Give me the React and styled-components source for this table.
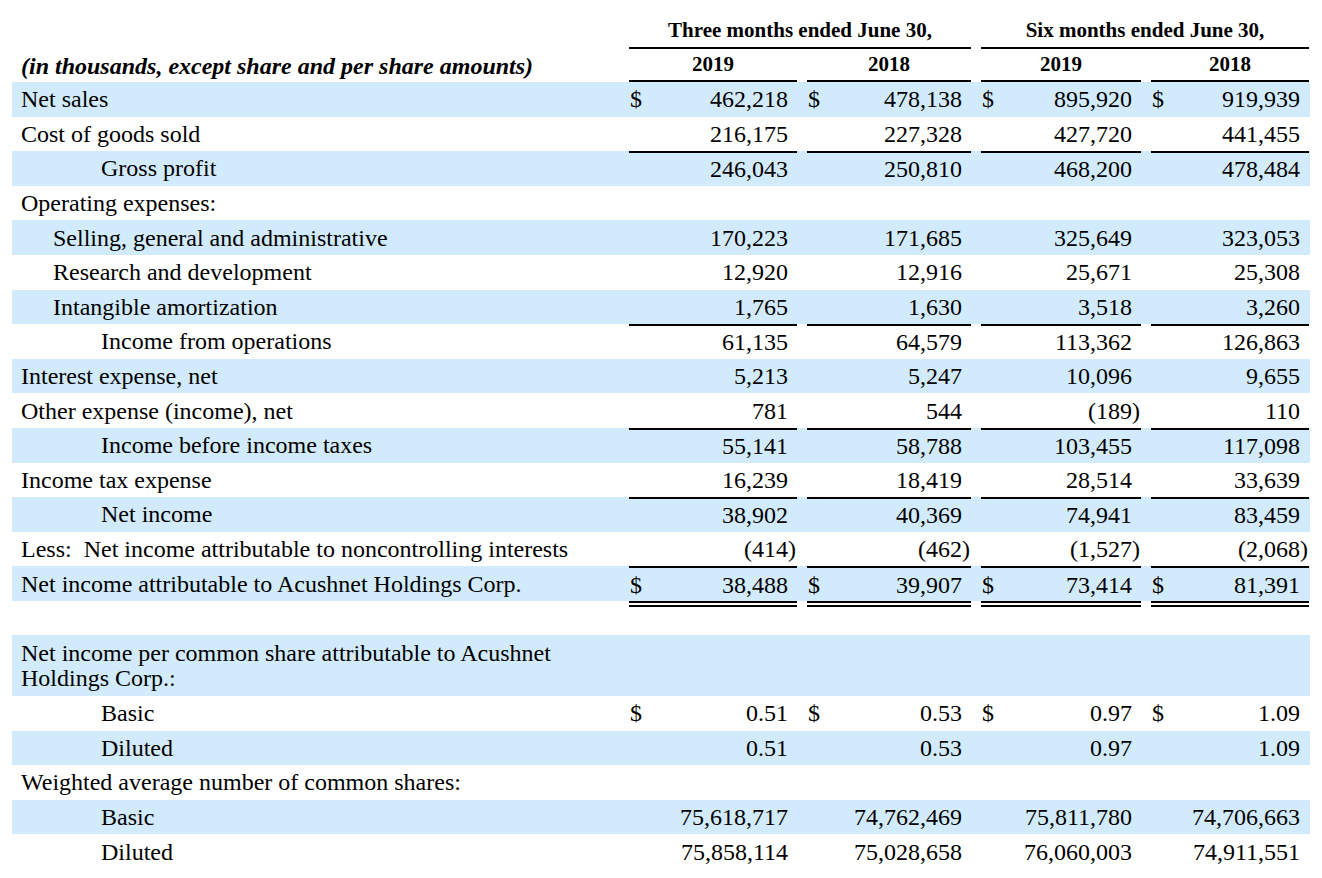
import React from 'react';
import styled, { createGlobalStyle } from 'styled-components';

const GlobalStyle = createGlobalStyle`
  body {
    margin: 0;
    background: #fff;
    color: #000;
    font-family: "Liberation Serif", "Times New Roman", serif;
  }
`;

const COLS = '607px 168px 164px 160px 158px';

const Page = styled.div`
  width: 1298px;
  padding: 0 12px;
`;

const Grid = styled.div`
  display: grid;
  grid-template-columns: ${COLS};
  column-gap: 10px;
`;

const PeriodRow = styled(Grid)`
  height: 49px;
  align-items: end;
`;

const PeriodHead = styled.div`
  grid-column: ${(p) => p.$col} / span 2;
  border-bottom: 2px solid #000;
  text-align: center;
  font-size: 21px;
  font-weight: bold;
  line-height: 23px;
  padding-bottom: 5px;
`;

const YearRow = styled(Grid)`
  height: 33px;
  align-items: end;
`;

const UnitsNote = styled.div`
  font-size: 24px;
  font-weight: bold;
  font-style: italic;
  padding: 0 0 3px 9px;
  line-height: 26px;
`;

const YearCell = styled.div`
  border-bottom: 2px solid #000;
  text-align: center;
  font-size: 21px;
  font-weight: bold;
  line-height: 23px;
  padding-bottom: 4px;
`;

const Row = styled(Grid)`
  height: ${(p) => (p.$tall ? '61px' : '34.6px')};
  background: ${(p) => (p.$shade ? '#d2ebfc' : 'transparent')};
  font-size: 24px;
  line-height: 25px;
`;

const Label = styled.div`
  display: flex;
  align-items: center;
  padding-left: ${(p) => [9, 41, 89][p.$indent]}px;
  padding-top: 1px;
  white-space: pre-wrap;
`;

const Amount = styled.div`
  display: flex;
  align-items: center;
  justify-content: space-between;
  padding: 1px 9px 0 0;
  border-top: ${(p) => (p.$rule ? '2px solid #000' : '0')};
`;

const Dollar = styled.span`
  padding-left: 1px;
`;

const Paren = styled.span`
  margin-right: -8px;
`;

const DoubleRow = styled(Grid)`
  height: 6px;
`;

const DoubleLine = styled.div`
  grid-column: ${(p) => p.$col};
  border-top: 6px double #000;
`;

const Spacer = styled.div`
  height: 28px;
`;

const income = [
  { label: 'Net sales', shade: true, dollar: true, values: ['462,218', '478,138', '895,920', '919,939'] },
  { label: 'Cost of goods sold', values: ['216,175', '227,328', '427,720', '441,455'] },
  { label: 'Gross profit', indent: 2, shade: true, rule: true, values: ['246,043', '250,810', '468,200', '478,484'] },
  { label: 'Operating expenses:' },
  { label: 'Selling, general and administrative', indent: 1, shade: true, values: ['170,223', '171,685', '325,649', '323,053'] },
  { label: 'Research and development', indent: 1, values: ['12,920', '12,916', '25,671', '25,308'] },
  { label: 'Intangible amortization', indent: 1, shade: true, values: ['1,765', '1,630', '3,518', '3,260'] },
  { label: 'Income from operations', indent: 2, rule: true, values: ['61,135', '64,579', '113,362', '126,863'] },
  { label: 'Interest expense, net', shade: true, values: ['5,213', '5,247', '10,096', '9,655'] },
  { label: 'Other expense (income), net', values: ['781', '544', '(189)', '110'] },
  { label: 'Income before income taxes', indent: 2, shade: true, rule: true, values: ['55,141', '58,788', '103,455', '117,098'] },
  { label: 'Income tax expense', values: ['16,239', '18,419', '28,514', '33,639'] },
  { label: 'Net income', indent: 2, shade: true, rule: true, values: ['38,902', '40,369', '74,941', '83,459'] },
  { label: 'Less:  Net income attributable to noncontrolling interests', values: ['(414)', '(462)', '(1,527)', '(2,068)'] },
  { label: 'Net income attributable to Acushnet Holdings Corp.', shade: true, rule: true, dollar: true, values: ['38,488', '39,907', '73,414', '81,391'] },
];

const perShare = [
  { label: 'Net income per common share attributable to Acushnet Holdings Corp.:', shade: true, tall: true },
  { label: 'Basic', indent: 2, dollar: true, values: ['0.51', '0.53', '0.97', '1.09'] },
  { label: 'Diluted', indent: 2, shade: true, values: ['0.51', '0.53', '0.97', '1.09'] },
  { label: 'Weighted average number of common shares:' },
  { label: 'Basic', indent: 2, shade: true, values: ['75,618,717', '74,762,469', '75,811,780', '74,706,663'] },
  { label: 'Diluted', indent: 2, values: ['75,858,114', '75,028,658', '76,060,003', '74,911,551'] },
];

const Value = ({ text }) => {
  if (text.endsWith(')')) {
    return (
      <span>
        {text.slice(0, -1)}
        <Paren>)</Paren>
      </span>
    );
  }
  return <span>{text}</span>;
};

const LineItem = ({ row }) => (
  <Row $shade={row.shade} $tall={row.tall}>
    <Label $indent={row.indent || 0}>{row.label}</Label>
    {row.values &&
      row.values.map((v, i) => (
        <Amount key={i} $rule={row.rule}>
          <Dollar>{row.dollar ? '$' : ''}</Dollar>
          <Value text={v} />
        </Amount>
      ))}
  </Row>
);

const App = () => {
  return (
    <Page>
      <GlobalStyle />
      <PeriodRow>
        <PeriodHead $col={2}>Three months ended June 30,</PeriodHead>
        <PeriodHead $col={4}>Six months ended June 30,</PeriodHead>
      </PeriodRow>
      <YearRow>
        <UnitsNote>(in thousands, except share and per share amounts)</UnitsNote>
        <YearCell>2019</YearCell>
        <YearCell>2018</YearCell>
        <YearCell>2019</YearCell>
        <YearCell>2018</YearCell>
      </YearRow>
      {income.map((row, i) => (
        <LineItem key={i} row={row} />
      ))}
      <DoubleRow>
        {[2, 3, 4, 5].map((c) => (
          <DoubleLine key={c} $col={c} />
        ))}
      </DoubleRow>
      <Spacer />
      {perShare.map((row, i) => (
        <LineItem key={i} row={row} />
      ))}
    </Page>
  );
};

export default App;
